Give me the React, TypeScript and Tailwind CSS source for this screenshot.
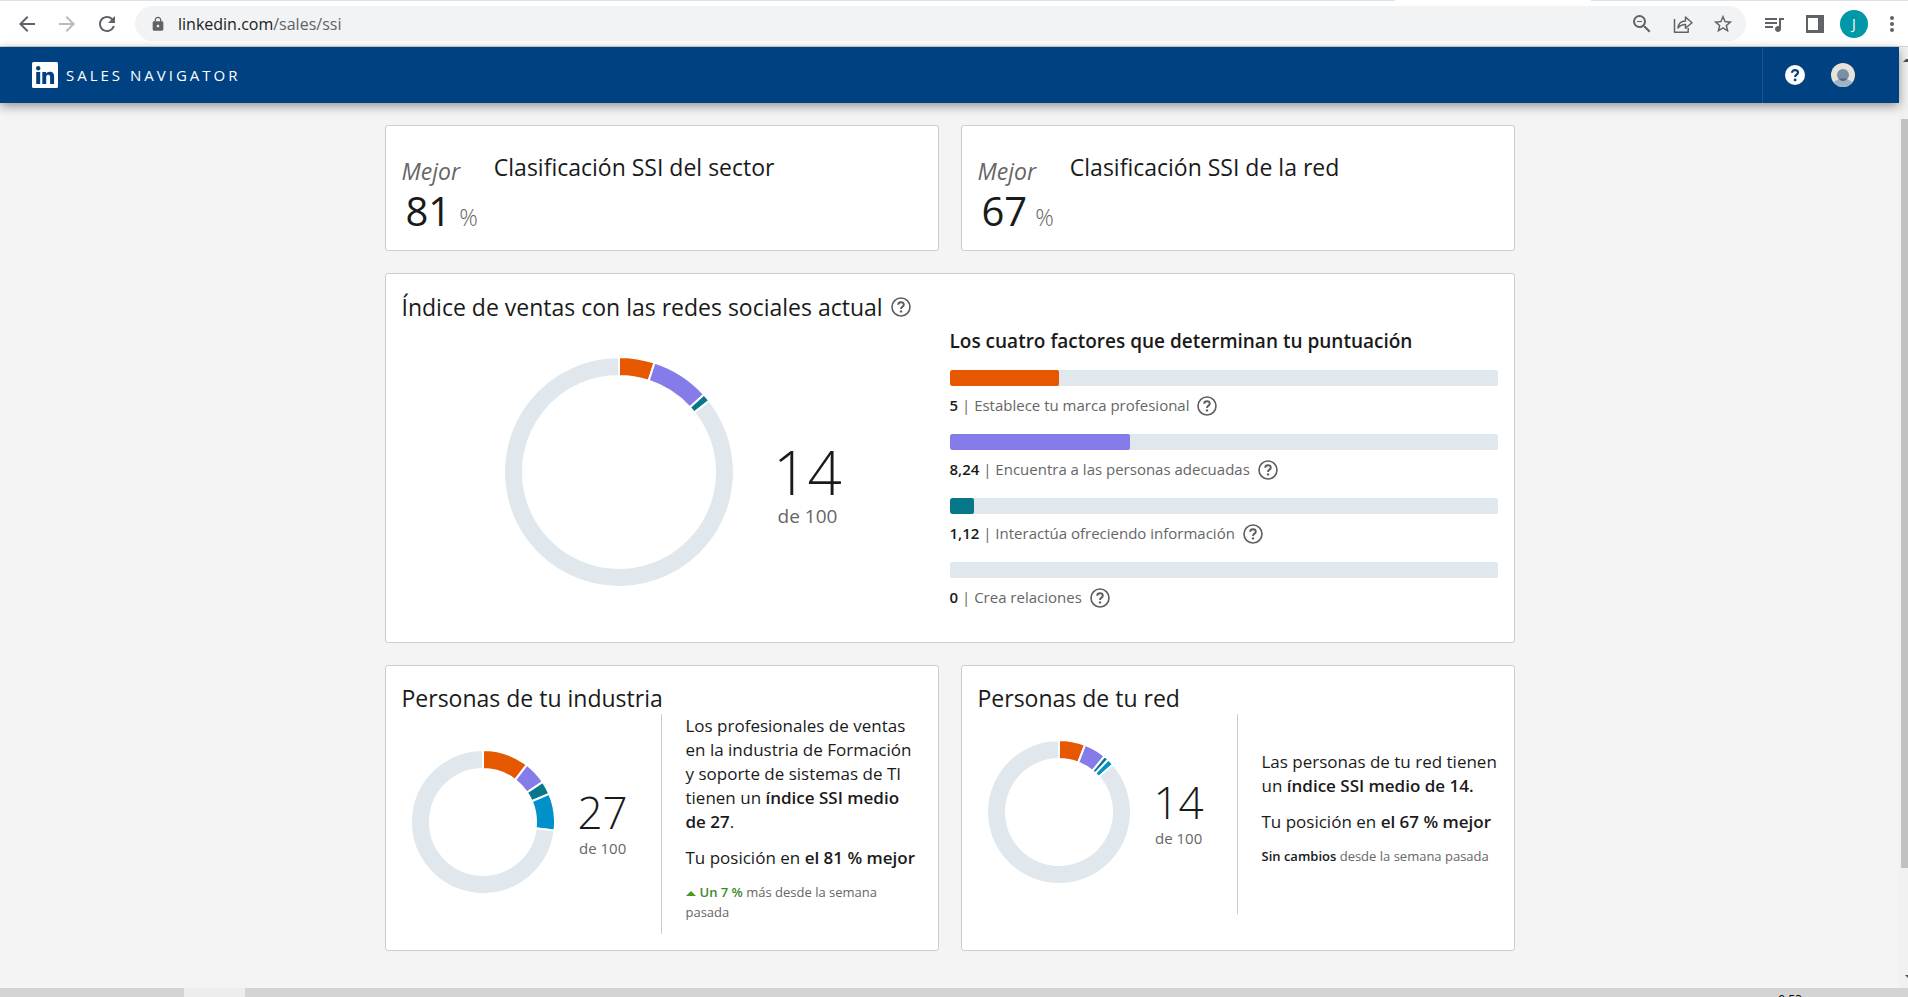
import type { ReactNode } from 'react';
import { MdArrowBack, MdArrowForward, MdLock, MdMoreVert, MdOutlineZoomOut, MdQueueMusic, MdRefresh, MdStarBorder } from 'react-icons/md';

interface Segment {
  value: number;
  color: string;
}

interface Factor {
  score: string;
  value: number;
  label: string;
  color: string;
}

const ORANGE = '#e65800';
const PURPLE = '#857ce9';
const TEAL = '#07788a';
const BLUE = '#0091ca';
const TRACK = '#e1e8ed';

const FACTORS: Factor[] = [
  { score: '5', value: 5, label: 'Establece tu marca profesional', color: ORANGE },
  { score: '8,24', value: 8.24, label: 'Encuentra a las personas adecuadas', color: PURPLE },
  { score: '1,12', value: 1.12, label: 'Interactúa ofreciendo información', color: TEAL },
  { score: '0', value: 0, label: 'Crea relaciones', color: BLUE },
];

const INDUSTRY: Segment[] = [
  { value: 10.4, color: ORANGE },
  { value: 5.2, color: PURPLE },
  { value: 3, color: TEAL },
  { value: 8.3, color: BLUE },
];

const NETWORK: Segment[] = [
  { value: 5.9, color: ORANGE },
  { value: 5, color: PURPLE },
  { value: 1.1, color: TEAL },
  { value: 1.5, color: BLUE },
];

function ringPath(c: number, outer: number, inner: number, from: number, to: number) {
  const point = (r: number, pct: number) => {
    const a = (pct / 100) * 2 * Math.PI;
    return `${(c + r * Math.sin(a)).toFixed(2)} ${(c - r * Math.cos(a)).toFixed(2)}`;
  };
  const large = to - from > 50 ? 1 : 0;
  return `M${point(outer, from)}A${outer} ${outer} 0 ${large} 1 ${point(outer, to)}L${point(inner, to)}A${inner} ${inner} 0 ${large} 0 ${point(inner, from)}Z`;
}

function Donut({ size, segments }: { size: number; segments: Segment[] }) {
  const used = segments.reduce((sum, s) => sum + s.value, 0);
  const all = [...segments, { value: 100 - used, color: TRACK }].filter(s => s.value > 0);
  const c = size / 2;
  let start = 0;
  return (
    <svg width={size} height={size} viewBox={`0 0 ${size} ${size}`} className="shrink-0" aria-hidden="true">
      {all.map(s => {
        const from = start;
        start += s.value;
        return <path key={s.color} d={ringPath(c, c + 1, c - 18, from, start)} fill={s.color} stroke="#fff" strokeWidth={2} />;
      })}
    </svg>
  );
}

function HelpButton({ label }: { label: string }) {
  return (
    <button type="button" aria-label={label} className="shrink-0 text-[#5e5e5e]">
      <svg width="20" height="20" viewBox="0 0 20 20" fill="none" stroke="currentColor" strokeWidth="1.6">
        <circle cx="10" cy="10" r="9" />
        <path d="M7.2 7.8C7.2 6.2 8.4 5.3 10 5.3s2.8.9 2.8 2.4c0 2-2.8 1.9-2.8 4.2" strokeWidth="1.9" />
        <circle cx="10" cy="14.4" r="1.2" fill="currentColor" stroke="none" />
      </svg>
    </button>
  );
}

function Card({ className = '', children }: { className?: string; children: ReactNode }) {
  return <section className={`rounded-[3px] border border-[#ccc] bg-white px-4 ${className}`}>{children}</section>;
}

function BrowserBar() {
  return (
    <div className="bg-white">
      <div className="flex h-px">
        <div className="flex-[1395] bg-[#dee1e6]" />
        <div className="flex-[196]" />
        <div className="flex-[317] bg-[#dee1e6]" />
      </div>
      <div className="flex h-[46px] items-center border-b border-[#d5d5d5] pr-1 pl-[15px] text-[#5f6368]">
        <button type="button" aria-label="Atrás" className="mr-4"><MdArrowBack size={24} /></button>
        <button type="button" aria-label="Adelante" className="mr-4 text-[#bababa]"><MdArrowForward size={24} /></button>
        <button type="button" aria-label="Recargar" className="mr-4"><MdRefresh size={24} /></button>
        <div className="flex h-[35px] flex-1 items-center rounded-full bg-[#f1f3f4] pr-3 pl-[15px]">
          <MdLock size={16} />
          <a href="#ssi" className="ml-3 flex-1 text-base text-[#5f6368]"><span className="text-[#202124]">linkedin.com</span>/sales/ssi</a>
          <div className="flex items-center gap-[19px]">
            <button type="button" aria-label="Zoom"><MdOutlineZoomOut size={24} /></button>
            <button type="button" aria-label="Compartir">
              <svg width="20" height="20" viewBox="0 0 20 20" fill="none" stroke="currentColor" strokeWidth="1.5">
                <path d="M1.5 5v13.2h13.7V14M5 14c.5-4.600 3-7 7.500-7V3l6.500 5.700-6.500 5.600v-3.700C9.200 10.600 7 11.600 5 14z" strokeLinejoin="round" />
              </svg>
            </button>
            <button type="button" aria-label="Favoritos"><MdStarBorder size={22} /></button>
          </div>
        </div>
        <button type="button" aria-label="Multimedia" className="ml-4"><MdQueueMusic size={24} /></button>
        <button type="button" aria-label="Panel lateral" className="ml-5">
          <svg width="18" height="18" viewBox="0 0 18 18"><path fillRule="evenodd" fill="currentColor" d="M0 0h18v18H0zM2 3h10v12H2z" /></svg>
        </button>
        <button type="button" aria-label="Perfil" className="ml-4 size-7 rounded-full bg-[#0097a7] text-sm text-white">J</button>
        <button type="button" aria-label="Menú" className="ml-3"><MdMoreVert size={24} /></button>
      </div>
    </div>
  );
}

function Header() {
  return (
    <header className="relative z-10 flex h-14 items-center justify-between bg-[#004182] pl-8 shadow-[0_3px_10px_rgba(0,0,0,0.4)]">
      <a href="#home" className="flex items-center gap-2 text-[15px] text-white">
        <svg width="26" height="26" viewBox="0 0 26 26" aria-hidden="true">
          <rect width="26" height="26" rx="1.500" fill="#fff" />
          <g fill="#004182">
            <circle cx="6.200" cy="6.200" r="2.200" />
            <rect x="4.200" y="10" width="4" height="12" />
            <path d="M10.300 10h3.800v1.700c.6-1.100 2-2 3.800-2 3.400 0 4.200 2.100 4.200 5.200V22h-4v-6.200c0-1.500-.1-3-1.900-3s-2 1.500-2 2.900V22h-3.900z" />
          </g>
        </svg>
        <span className="tracking-[3px]">SALES NAVIGATOR</span>
      </a>
      <div className="flex h-full items-center gap-[26px] border-l border-[#1a5491] pr-11 pl-[22px]">
        <button type="button" aria-label="Ayuda">
          <svg width="20" height="20" viewBox="0 0 20 20" fill="none">
            <circle cx="10" cy="10" r="10" fill="#fff" />
            <path d="M7 7.700C7 6 8.300 5.200 10 5.200s3 .9 3 2.400c0 2.100-2.900 2-2.900 4.300" stroke="#004182" strokeWidth="2.200" />
            <circle cx="10.100" cy="14.900" r="1.400" fill="#004182" />
          </svg>
        </button>
        <button type="button" aria-label="Cuenta">
          <svg width="24" height="24" viewBox="0 0 24 24">
            <defs><clipPath id="face"><circle cx="12" cy="12" r="12" /></clipPath></defs>
            <g clipPath="url(#face)">
              <rect width="24" height="24" fill="#e7e2dc" />
              <path d="M1 24c0-5 4-8 11-8s11 3 11 8z" fill="#9db3c8" />
              <circle cx="12" cy="12" r="6" fill="#788fa5" />
              <path d="M8 15.500h8c-1 1.700-2.300 2.400-4 2.400s-3-.7-4-2.400z" fill="#56687a" />
            </g>
          </svg>
        </button>
      </div>
    </header>
  );
}

function RankCard({ percent, title }: { percent: string; title: string }) {
  return (
    <Card className="flex gap-4 pt-[25px] pb-[15px]">
      <div>
        <p className="text-[23px] leading-10 text-[#666] italic">Mejor</p>
        <p className="flex items-baseline gap-2 pl-1 text-[#666]">
          <span className="text-[40px] leading-10 text-[#1a1a1a]">{percent}</span>
          <span className="text-[23px] font-light">%</span>
        </p>
      </div>
      <h2 className="text-[23px] leading-8">{title}</h2>
    </Card>
  );
}

function PeopleCard({ title, score, segments, children }: { title: string; score: string; segments: Segment[]; children: ReactNode }) {
  return (
    <Card className="pt-4 pb-4">
      <h2 className="text-[23px] leading-8">{title}</h2>
      <div className="flex min-h-[200px]">
        <div className="flex w-[260px] shrink-0 items-center gap-6 border-r border-[#ccc] pb-1 pl-[10px]">
          <Donut size={142} segments={segments} />
          <div className="pt-1 text-center">
            <p className="text-[44px] leading-12 font-light">{score}</p>
            <p className="text-[15px] leading-6 text-[#666]">de 100</p>
          </div>
        </div>
        <div className="flex flex-1 flex-col justify-center gap-3 pb-3 pl-6 text-[17px] leading-6">{children}</div>
      </div>
    </Card>
  );
}

export default function App() {
  return (
    <div className="flex min-h-screen flex-col bg-[#f4f4f4] font-['Open_Sans','Noto_Sans',sans-serif] text-[#1a1a1a]">
      <BrowserBar />
      <div className="flex flex-1">
        <div className="min-w-0 flex-1">
          <Header />
          <main className="mx-auto grid max-w-[1130px] grid-cols-2 gap-[22px] py-[22px]">
            <RankCard percent="81" title="Clasificación SSI del sector" />
            <RankCard percent="67" title="Clasificación SSI de la red" />

            <Card className="col-span-2 pt-[17px] pb-8">
              <div className="flex items-center gap-2">
                <h2 className="text-[23px] leading-8">Índice de ventas con las redes sociales actual</h2>
                <HelpButton label="Ayuda sobre el índice" />
              </div>
              <div className="mt-1 grid grid-cols-2">
                <div className="flex items-center justify-center gap-10 pt-2 pr-1">
                  <Donut size={228} segments={FACTORS} />
                  <div className="pt-6 text-center">
                    <p className="text-[60px] leading-[64px] font-light">14</p>
                    <p className="text-[19px] leading-6 text-[#666]">de 100</p>
                  </div>
                </div>
                <div>
                  <h3 className="text-[19px] leading-7 font-semibold">Los cuatro factores que determinan tu puntuación</h3>
                  <ul className="mt-[15px] space-y-4">
                    {FACTORS.map(f => (
                      <li key={f.label}>
                        <div className="h-4 overflow-hidden rounded-[2px] bg-[#e1e8ed]">
                          <div className="h-full rounded-[2px]" style={{ width: `${(f.value / 25) * 100}%`, backgroundColor: f.color }} />
                        </div>
                        <div className="mt-2 flex h-6 items-center gap-2 text-[15px] text-[#666]">
                          <span><b className="font-semibold text-[#1a1a1a]">{f.score}</b> | {f.label}</span>
                          <HelpButton label={`Ayuda: ${f.label}`} />
                        </div>
                      </li>
                    ))}
                  </ul>
                </div>
              </div>
            </Card>

            <PeopleCard title="Personas de tu industria" score="27" segments={INDUSTRY}>
              <p>Los profesionales de ventas en la industria de Formación y soporte de sistemas de TI tienen un <b className="font-semibold">índice SSI medio de 27</b>.</p>
              <p>Tu posición en <b className="font-semibold">el 81 % mejor</b></p>
              <p className="text-[13px] leading-5 text-[#666]">
                <svg width="10" height="5" viewBox="0 0 10 5" className="mr-1 inline align-middle" aria-hidden="true"><path d="M0 5 5 0l5 5z" fill="#469a1f" /></svg>
                <b className="font-semibold text-[#3b8a2a]">Un 7 %</b> más desde la semana pasada
              </p>
            </PeopleCard>
            <PeopleCard title="Personas de tu red" score="14" segments={NETWORK}>
              <p>Las personas de tu red tienen un <b className="font-semibold">índice SSI medio de 14.</b></p>
              <p>Tu posición en <b className="font-semibold">el 67 % mejor</b></p>
              <p className="text-[13px] leading-5 text-[#666]"><b className="font-semibold text-[#1a1a1a]">Sin cambios</b> desde la semana pasada</p>
            </PeopleCard>
          </main>
        </div>

        {/* Page scrollbar */}
        <div className="flex w-[9px] flex-col items-end overflow-hidden bg-[#f1f1f1] pt-3 pb-[10px]">
          <svg width="5" height="3" viewBox="0 0 5 3"><path d="M0 3 3 0h2v3z" fill="#505050" /></svg>
          <div className="mt-[57px] w-[7px] flex-[749] bg-[#c1c1c1]" />
          <div className="flex-[107]" />
          <svg width="3" height="3" viewBox="0 0 3 3"><path d="M0 0h3v3z" fill="#505050" /></svg>
        </div>
      </div>

      {/* Top edge of the taskbar */}
      <div className="flex h-[9px] justify-between overflow-hidden bg-[#d4d4d4]">
        <div className="ml-[184px] w-[61px] bg-[#ededed]" />
        <time className="mr-[106px] pt-1 text-xs text-black">9:53</time>
      </div>
    </div>
  );
}
